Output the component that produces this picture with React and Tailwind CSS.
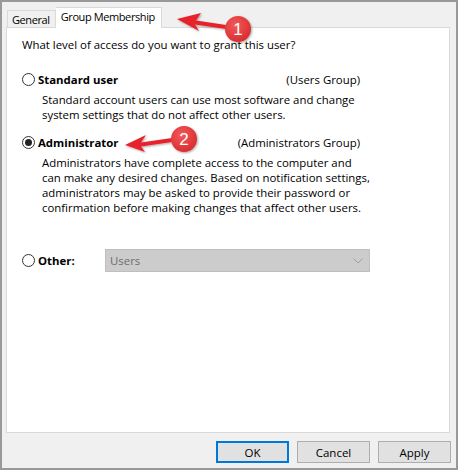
import React from 'react';

const font = { fontFamily: '"Open Sans", "Liberation Sans", sans-serif' };

const Radio = ({ checked }) => (
    <span className="w-[13px] h-[13px] rounded-full border border-[#333] bg-white flex items-center justify-center shrink-0">
        {checked && <span className="w-[7px] h-[7px] rounded-full bg-[#222]" />}
    </span>
);

const Btn = ({ children, primary }) => (
    <button className={`w-[73px] h-[22px] bg-[#e1e1e1] text-[11.5px] text-black flex items-center justify-center ${primary ? 'border-2 border-[#0078d7]' : 'border border-[#adadad]'}`}>
        {children}
    </button>
);

const Annotations = () => (
    <svg className="absolute inset-0 pointer-events-none" width="458" height="470" viewBox="0 0 458 470">
        <defs>
            <filter id="sh" x="-20%" y="-20%" width="140%" height="140%">
                <feDropShadow dx="1" dy="1" stdDeviation="1" floodColor="#000" floodOpacity="0.35" />
            </filter>
            <radialGradient id="bg" cx="40%" cy="35%" r="70%">
                <stop offset="0%" stopColor="#f25a5a" />
                <stop offset="100%" stopColor="#d92a2f" />
            </radialGradient>
        </defs>
        <g filter="url(#sh)">
            <path d="M175 17 L199 11 L194 18.5 L224 23 L224 27 L193 22.5 L197 29 Z" fill="#e8232b" />
            <circle cx="236" cy="27" r="13" fill="url(#bg)" />
            <path d="M123 143 L144 133 L139 140.5 L170 136 L170 140 L139 144.5 L143 150 Z" fill="#e8232b" />
            <circle cx="182" cy="137" r="13" fill="url(#bg)" />
        </g>
        <text x="236" y="33" textAnchor="middle" fill="#fff" fontSize="17" fontFamily="Liberation Sans, sans-serif">1</text>
        <text x="182" y="143" textAnchor="middle" fill="#fff" fontSize="17" fontFamily="Liberation Sans, sans-serif">2</text>
    </svg>
);

export default function App() {
    return (
        <div className="relative w-[458px] h-[470px] bg-[#f0f0f0] border-2 border-[#999] text-[11.4px] text-black leading-[15px]" style={font}>
            <div className="flex items-end h-[25px] pl-[5px] text-[11px] tracking-[-0.4px]">
                <div className="h-[17px] pl-[4px] pr-[5px] border border-b-0 border-[#d9d9d9] bg-[#f0f0f0] flex items-center">General</div>
                <div className="h-[21px] pl-[5px] pr-[6px] border border-b-0 border-l-0 border-[#d9d9d9] bg-white flex items-center relative top-[1px] z-10 pb-[3px]">Group Membership</div>
            </div>
            <div className="ml-[4px] w-[444px] h-[406px] bg-white border border-[#d9d9d9] pl-[15px] pt-[9px]">
                <p>What level of access do you want to grant this user?</p>
                <div className="mt-[20px] flex items-center gap-[3px] w-[338px]">
                    <Radio />
                    <span className="font-bold flex-1">Standard user</span>
                    <span>(Users Group)</span>
                </div>
                <p className="pl-[20px] mt-[5px] whitespace-nowrap">
                    Standard account users can use most software and change<br />
                    system settings that do not affect other users.
                </p>
                <div className="mt-[13px] flex items-center gap-[3px] w-[338px]">
                    <Radio checked />
                    <span className="font-bold flex-1">Administrator</span>
                    <span>(Administrators Group)</span>
                </div>
                <p className="pl-[20px] mt-[5px] whitespace-nowrap">
                    Administrators have complete access to the computer and<br />
                    can make any desired changes. Based on notification settings,<br />
                    administrators may be asked to provide their password or<br />
                    confirmation before making changes that affect other users.
                </p>
                <div className="mt-[34px] flex items-center gap-[3px]">
                    <Radio />
                    <span className="font-bold w-[64px]">Other:</span>
                    <div className="w-[265px] h-[23px] bg-[#cccccc] border border-[#bfbfbf] flex items-center justify-between pl-[4px] pr-[6px] text-[#6d6d6d]">
                        <span>Users</span>
                        <svg width="10" height="6" viewBox="0 0 10 6"><path d="M0.5 0.5 L5 5 L9.5 0.5" fill="none" stroke="#a0a0a0" strokeWidth="1" /></svg>
                    </div>
                </div>
            </div>
            <div className="flex justify-end gap-[8px] pr-[5px] mt-[8px]">
                <Btn primary>OK</Btn>
                <Btn>Cancel</Btn>
                <Btn>Apply</Btn>
            </div>
            <Annotations />
        </div>
    );
}
